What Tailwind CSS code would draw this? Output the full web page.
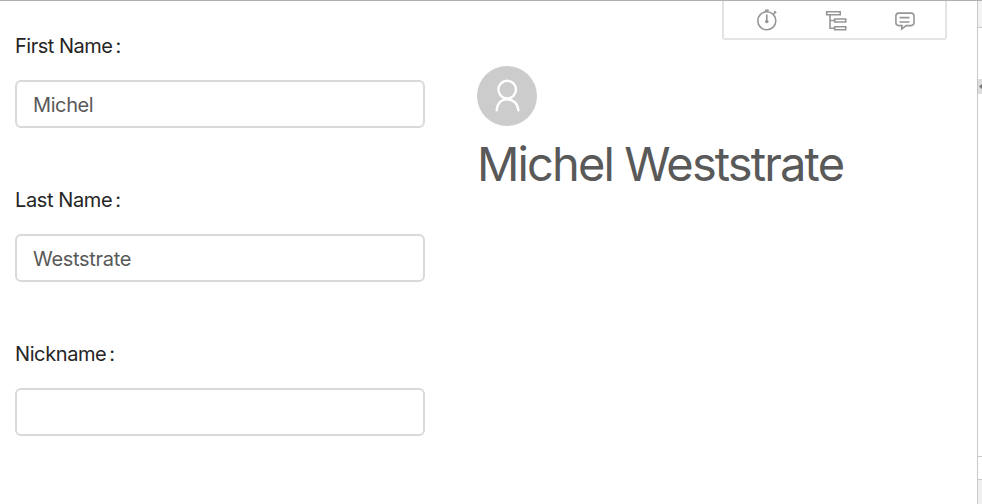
<!DOCTYPE html>
<html lang="en">
<head>
<meta charset="utf-8">
<title>Profile</title>
<script src="https://cdn.jsdelivr.net/npm/@tailwindcss/browser@4"></script>
</head>
<body class="relative flex h-[504px] w-[982px] overflow-hidden border-t border-[#b0b0b0] bg-white font-['Inter',sans-serif]">
<form class="flex w-[477px] shrink-0 flex-col gap-[26px] pl-[15px] pt-[31px]">
  <div class="flex h-32 flex-col"><label for="f" class="h-12 text-[20px] leading-7 text-[#252525]"><span class="tracking-[-0.5px]">First Name</span><span class="ml-[3px]">:</span></label><input id="f" value="Michel" class="h-12 w-[410px] rounded-[6px] border-2 border-[#d9d9d9] px-4 pt-[2px] text-[20px] tracking-[-0.4px] text-[#595959]"></div>
  <div class="flex h-32 flex-col"><label for="l" class="h-12 text-[20px] leading-7 text-[#252525]"><span class="tracking-[-0.4px]">Last Name</span><span class="ml-[3px]">:</span></label><input id="l" value="Weststrate" class="h-12 w-[410px] rounded-[6px] border-2 border-[#d9d9d9] px-4 pt-[2px] text-[20px] tracking-[-0.3px] text-[#595959]"></div>
  <div class="flex h-32 flex-col"><label for="n" class="h-12 text-[20px] leading-7 text-[#252525]"><span class="tracking-[-0.4px]">Nickname</span><span class="ml-[3px]">:</span></label><input id="n" class="h-12 w-[410px] rounded-[6px] border-2 border-[#d9d9d9] px-4 text-[20px]"></div>
</form>
<main class="w-[500px] shrink-0 pt-[65px]">
  <div class="flex size-[60px] items-center justify-center rounded-full bg-[#cccccc]">
    <svg class="size-[60px]" viewBox="0 0 60 60" fill="none" stroke="white" stroke-width="2.4" stroke-linecap="round"><circle cx="30.2" cy="23.6" r="8.8"/><path d="M19.7 44.3C20.3 37.2 24.5 33.4 30.2 33.4s10.6 3.8 11.2 10.9"/></svg>
  </div>
  <h1 class="mt-[10px] whitespace-nowrap text-[47px] leading-[56px] tracking-[-1.88px] text-[#595959]">Michel Weststrate</h1>
</main>
<aside class="flex w-[5px] shrink-0 flex-col border-l border-[#c8c8c8]">
  <div class="h-[27px] border-b border-[#c8c8c8] bg-[#f3f3f3]"></div>
  <div class="h-[51px]"></div>
  <div class="flex h-[15px] items-center justify-end bg-[#dddddd]"><svg class="h-[5px] w-[3px]" viewBox="0 0 3 5"><path d="M0 2.5L3 0V5Z" fill="#777"/></svg></div>
  <div class="h-[363px] border-b border-[#c8c8c8]"></div>
  <div class="h-[23px] border-b border-[#c8c8c8]"></div>
  <div class="grow bg-[#f0f0f0]"></div>
</aside>
<nav class="absolute left-[722px] top-0 flex h-[39px] w-[225px] rounded-b-[3px] border-2 border-t-0 border-[#e3e3e3] bg-white">
  <svg class="h-[37px] w-[221px]" viewBox="724 1 221 37" fill="none" stroke="#969696" stroke-width="1.6">
    <circle cx="766.8" cy="20.8" r="9"/><path d="M765 10.2h3.8M766.8 9.8v2M773.5 14l2-2M774.2 11.2l2 1.8M766.8 14.5v7.5"/><circle cx="766.8" cy="21.5" r="1" fill="#969696"/>
    <path d="M826.7 11.7h13.5v3h-13.5zM834.7 19h11v3h-11zM834.7 26.7h11v3h-11zM830 14.7v13.5h4.7M830 20.5h4.7"/>
    <path d="M898.7 13.1h12.3c2 0 3 1 3 3v6.5c0 2-1 3-3 3h-4.8l-4.5 3.5.3-3.5h-3.3c-2 0-2.8-1-2.8-3v-6.5c0-2 .8-3 2.8-3zM899.5 17.6h10M899.5 22h10"/>
  </svg>
</nav>
</body>
</html>
